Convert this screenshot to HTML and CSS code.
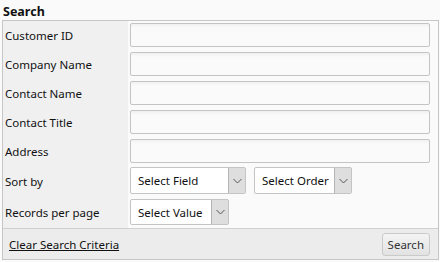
FILE: index.html
```html
<!DOCTYPE html>
<html lang="en">
<head>
    <meta charset="UTF-8">
    <title>Search</title>
    <link rel="stylesheet" href="styles.css">
</head>
<body>
    <h2 class="title">Search</h2>
    <div class="panel">
        <div class="row">
            <label class="label">Customer ID</label>
            <div class="field"><input type="text" class="text-input"></div>
        </div>
        <div class="row">
            <label class="label">Company Name</label>
            <div class="field"><input type="text" class="text-input"></div>
        </div>
        <div class="row">
            <label class="label">Contact Name</label>
            <div class="field"><input type="text" class="text-input"></div>
        </div>
        <div class="row">
            <label class="label">Contact Title</label>
            <div class="field"><input type="text" class="text-input"></div>
        </div>
        <div class="row">
            <label class="label">Address</label>
            <div class="field"><input type="text" class="text-input"></div>
        </div>
        <div class="row sort-row">
            <label class="label">Sort by</label>
            <div class="field">
                <div class="select select-field">
                    <span class="select-text">Select Field</span>
                    <span class="arrow"><svg width="9" height="6" viewBox="0 0 9 6"><polyline points="0.5,1 4.5,5 8.5,1" fill="none" stroke="#555" stroke-width="1"/></svg></span>
                </div>
                <div class="select select-order">
                    <span class="select-text">Select Order</span>
                    <span class="arrow"><svg width="9" height="6" viewBox="0 0 9 6"><polyline points="0.5,1 4.5,5 8.5,1" fill="none" stroke="#555" stroke-width="1"/></svg></span>
                </div>
            </div>
        </div>
        <div class="row pages-row">
            <label class="label">Records per page</label>
            <div class="field">
                <div class="select select-value">
                    <span class="select-text">Select Value</span>
                    <span class="arrow"><svg width="9" height="6" viewBox="0 0 9 6"><polyline points="0.5,1 4.5,5 8.5,1" fill="none" stroke="#555" stroke-width="1"/></svg></span>
                </div>
            </div>
        </div>
        <div class="footer">
            <a href="#" class="clear-link">Clear Search Criteria</a>
            <button class="search-btn">Search</button>
        </div>
    </div>
</body>
</html>
```

FILE: styles.css
```css
body {
    margin: 0;
    padding: 0 2px;
    background-color: #fafafa;
    font-family: "Noto Sans", "Open Sans", sans-serif;
    font-size: 11.5px;
    color: #111;
}

.title {
    font-size: 12.5px;
    font-weight: bold;
    margin: 0;
    padding: 3px 0 0 1px;
    height: 17px;
    line-height: 17px;
}

.panel {
    border: 1px solid #c6c6c6;
    width: 437px;
    box-sizing: border-box;
}

.row {
    display: grid;
    grid-template-columns: 125px 1fr;
}

.label {
    background-color: #f0f0f0;
    padding-left: 2px;
    display: flex;
    align-items: center;
    height: 29px;
}

.field {
    display: flex;
    align-items: flex-start;
    gap: 8px;
    padding: 2px 8px 0 2px;
    height: 29px;
    box-sizing: border-box;
}

.text-input {
    width: 100%;
    height: 24px;
    box-sizing: border-box;
    border: 1px solid #c4c4c4;
    border-radius: 2px;
    background: linear-gradient(#f0f0f0, #fafafa 4px);
    margin: 0;
}

.sort-row .label,
.sort-row .field {
    height: 31px;
}

.sort-row .field {
    padding-top: 1px;
}

.pages-row .label,
.pages-row .field {
    height: 31px;
}

.pages-row .field {
    padding-top: 2px;
}

.select {
    display: flex;
    align-items: stretch;
    background-color: #fff;
    border: 1px solid #c4c4c4;
    border-radius: 2px;
    box-sizing: border-box;
    height: 27px;
}

.select-value {
    height: 26px;
}

.select-text {
    flex: 1;
    display: flex;
    align-items: center;
    padding-left: 7px;
    white-space: nowrap;
}

.arrow {
    width: 16px;
    background-color: #dedede;
    border-left: 1px solid #b4b4b4;
    display: flex;
    align-items: center;
    justify-content: center;
}

.select-field {
    width: 116px;
}

.select-order {
    width: 98px;
}

.select-value {
    width: 99px;
}

.footer {
    display: flex;
    justify-content: space-between;
    align-items: center;
    background-color: #ececec;
    border-top: 1px solid #d0d0d0;
    height: 30px;
    padding: 0 8px 0 6px;
}

.clear-link {
    color: #111;
    text-decoration: underline;
}

.search-btn {
    font-family: inherit;
    font-size: 11.5px;
    color: #333;
    background: linear-gradient(#f4f4f4, #e2e2e2);
    border: 1px solid #cacaca;
    border-radius: 3px;
    height: 23px;
    padding: 0 5px;
    margin-top: 1px;
}
```
